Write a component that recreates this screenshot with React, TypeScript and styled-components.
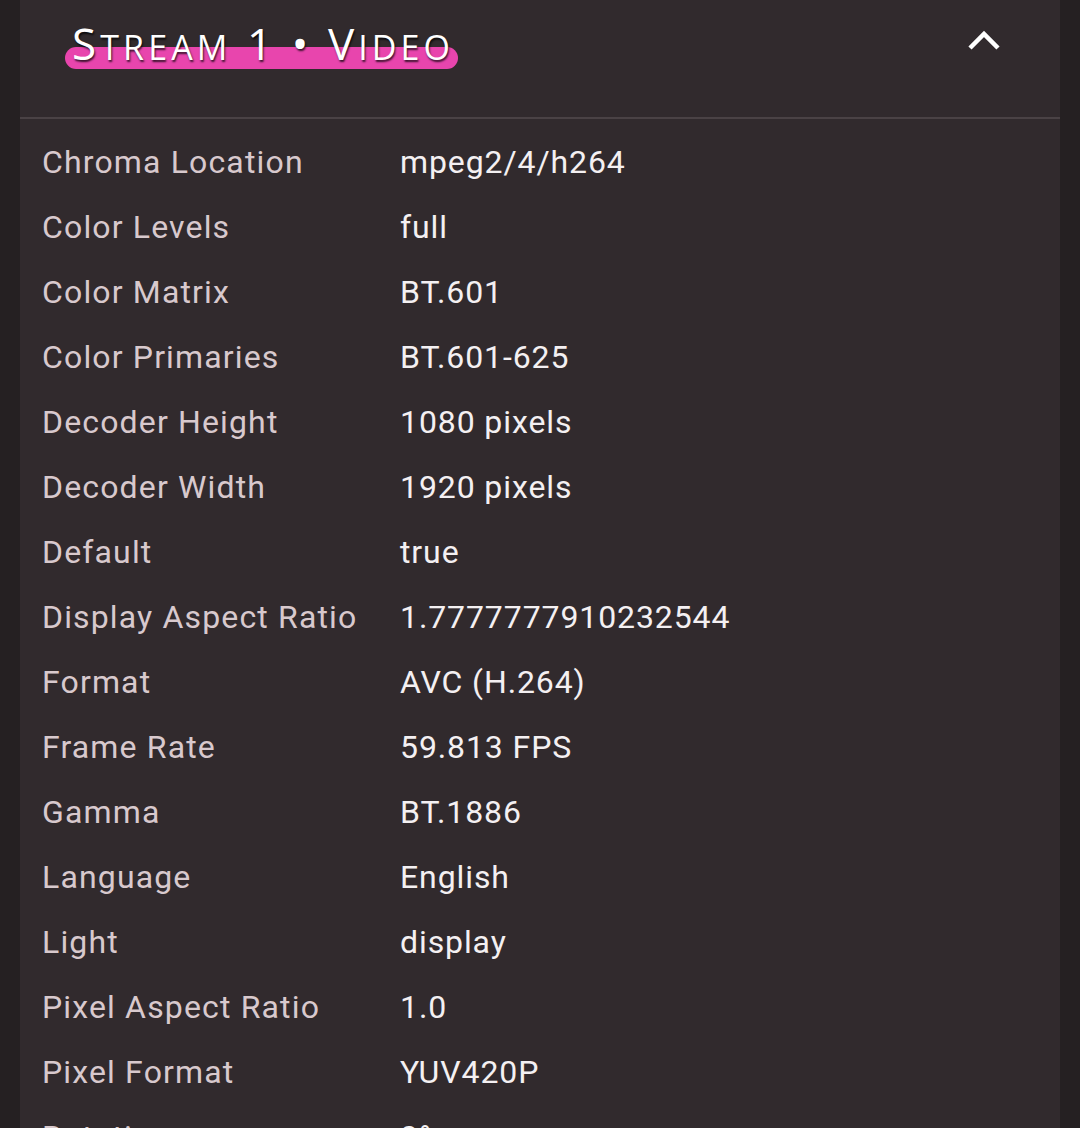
import React from "react";
import styled, { createGlobalStyle } from "styled-components";

const Global = createGlobalStyle`
  html, body { margin: 0; padding: 0; background: #252022; }
  body { font-family: Roboto, "Noto Sans", sans-serif; overflow: hidden; }
`;

const Page = styled.div`
  padding: 0 20px;
  height: 1128px;
  overflow: hidden;
`;

const Panel = styled.section`
  background: #312a2d;
  min-height: 1128px;
`;

const Header = styled.header`
  height: 117px;
  display: flex;
  align-items: flex-start;
  justify-content: space-between;
  padding: 0 58px 0 45px;
  border-bottom: 2px solid #4a4245;
`;

const TitleWrap = styled.div`
  position: relative;
  margin-top: 17px;
  padding: 0 4px 0 7px;
`;

const Highlight = styled.span`
  position: absolute;
  left: 0;
  right: 0;
  top: 30px;
  height: 22px;
  border-radius: 11px;
  background: #e845ad;
`;

const Title = styled.h2`
  position: relative;
  margin: 0;
  font-family: "Open Sans", "Noto Sans", sans-serif;
  font-weight: 500;
  font-size: 44px;
  line-height: 52px;
  letter-spacing: 4.1px;
  color: #ffffff;
  text-shadow: 1px 2px 2px rgba(0, 0, 0, 0.75);
  white-space: nowrap;
`;

const Small = styled.span`
  font-size: 34px;
  text-transform: uppercase;
`;

const Toggle = styled.button`
  margin-top: 27px;
  background: none;
  border: none;
  padding: 0;
  width: 36px;
  height: 28px;
  display: flex;
  align-items: center;
  justify-content: center;
  color: #ffffff;
  cursor: pointer;
`;

const List = styled.dl`
  margin: 0;
  padding: 10px 0 0 22px;
`;

const Row = styled.div`
  display: grid;
  grid-template-columns: 358px 1fr;
  height: 65px;
  align-items: center;
`;

const Label = styled.dt`
  margin: 0;
  font-size: 32px;
  letter-spacing: 1.15px;
  color: #d8c9cd;
  white-space: nowrap;
`;

const Value = styled.dd`
  margin: 0;
  font-size: 32px;
  letter-spacing: 0.9px;
  color: #f4f0f2;
  white-space: nowrap;
`;

const rows: [string, string][] = [
  ["Chroma Location", "mpeg2/4/h264"],
  ["Color Levels", "full"],
  ["Color Matrix", "BT.601"],
  ["Color Primaries", "BT.601-625"],
  ["Decoder Height", "1080 pixels"],
  ["Decoder Width", "1920 pixels"],
  ["Default", "true"],
  ["Display Aspect Ratio", "1.7777777910232544"],
  ["Format", "AVC (H.264)"],
  ["Frame Rate", "59.813 FPS"],
  ["Gamma", "BT.1886"],
  ["Language", "English"],
  ["Light", "display"],
  ["Pixel Aspect Ratio", "1.0"],
  ["Pixel Format", "YUV420P"],
  ["Rotation", "0°"],
];

export default function App() {
  return (
    <>
      <Global />
      <Page>
        <Panel>
          <Header>
            <TitleWrap>
              <Highlight />
              <Title>
                S<Small>tream</Small> 1 • V<Small>ideo</Small>
              </Title>
            </TitleWrap>
            <Toggle aria-label="Collapse">
              <svg width="34" height="22" viewBox="0 0 34 22" fill="none">
                <path d="M3 18 L17 4 L31 18" stroke="currentColor" strokeWidth="4.5" strokeLinecap="butt" strokeLinejoin="miter" />
              </svg>
            </Toggle>
          </Header>
          <List>
            {rows.map(([k, v]) => (
              <Row key={k}>
                <Label>{k}</Label>
                <Value>{v}</Value>
              </Row>
            ))}
          </List>
        </Panel>
      </Page>
    </>
  );
}
